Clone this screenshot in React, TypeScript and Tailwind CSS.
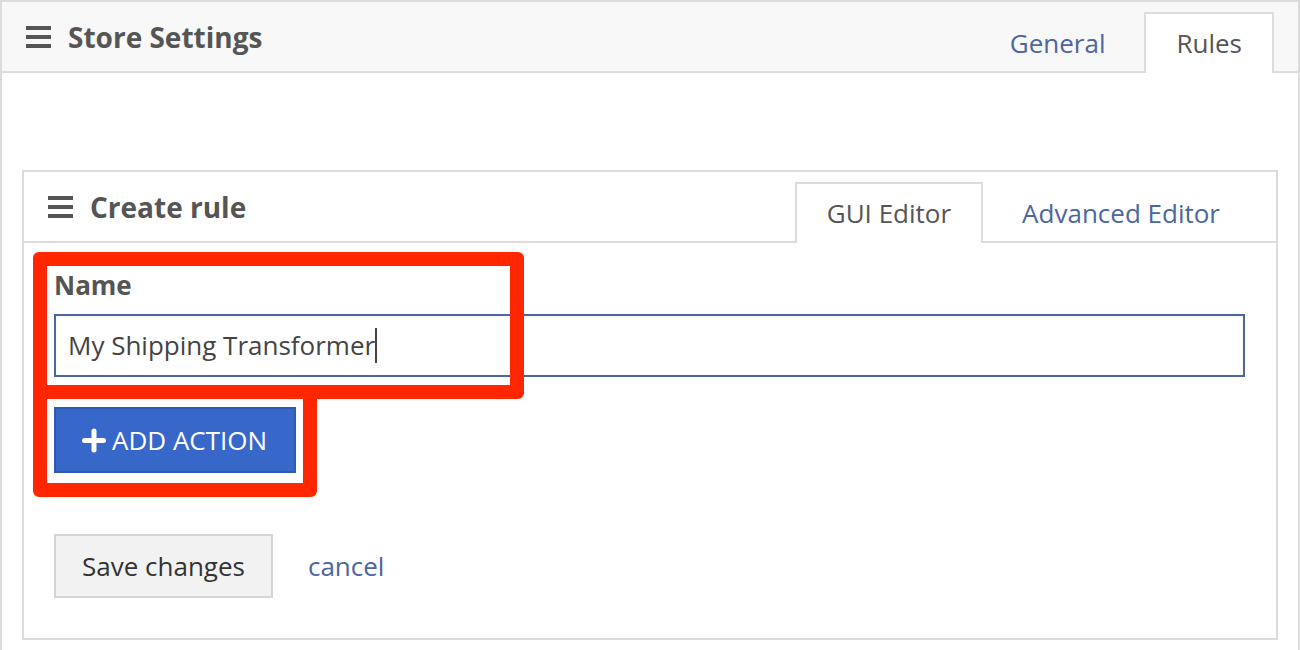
import React from "react";

const Burger = () => (
  <svg width="25" height="22" viewBox="0 0 25 22" className="shrink-0 text-[#555]">
    <rect x="0" y="0" width="25" height="4" fill="currentColor" />
    <rect x="0" y="9" width="25" height="4" fill="currentColor" />
    <rect x="0" y="18" width="25" height="4" fill="currentColor" />
  </svg>
);

const Tab = ({ label, active }: { label: string; active?: boolean }) => (
  <div
    className={`h-[61px] px-[30px] flex items-center border-2 border-b-0 text-[26px] ${
      active ? "bg-white border-[#dcdcdc] text-[#555]" : "border-transparent text-[#4b66a0]"
    }`}
  >
    {label}
  </div>
);

const App = () => {
  return (
    <div
      className="relative w-[1300px] h-[650px] overflow-hidden bg-white"
      style={{ fontFamily: '"Open Sans", "Liberation Sans", sans-serif' }}
    >
      <div className="border-2 border-[#dcdcdc] h-[700px]">
        {/* store settings header */}
        <div className="h-[71px] bg-[#f8f8f8] border-b-2 border-[#dcdcdc] flex items-center justify-between">
          <div className="flex items-center gap-[17px] pl-6">
            <Burger />
            <h1 className="text-[28px] font-bold text-[#555]">Store Settings</h1>
          </div>
          <div className="flex items-end gap-[7px] self-end mb-[-2px] mr-6">
            <Tab label="General" />
            <Tab label="Rules" active />
          </div>
        </div>

        <div className="px-5 pt-[97px]">
          <div className="border-2 border-[#dcdcdc]">
            {/* create rule header */}
            <div className="h-[71px] border-b-2 border-[#dcdcdc] flex items-center justify-between">
              <div className="flex items-center gap-[17px] pl-6">
                <Burger />
                <h2 className="text-[28px] font-bold text-[#555]">Create rule</h2>
              </div>
              <div className="flex items-end gap-[7px] self-end mb-[-2px] mr-6">
                <Tab label="GUI Editor" active />
                <Tab label="Advanced Editor" />
              </div>
            </div>

            <div className="pl-[30px] pr-[31px] pt-6 pb-10">
              <label className="block text-[26px] leading-[36px] font-bold text-[#555]">Name</label>
              <div className="mt-[11px] h-[63px] border-2 border-[#4b66a0] flex items-center pl-3 text-[26px] text-[#444] shadow-[inset_0_1px_3px_rgba(0,0,0,0.06)]">
                My Shipping Transformer
                <span className="inline-block w-[2px] h-[35px] bg-[#444]" />
              </div>

              <button className="mt-[30px] h-[66px] pl-[26px] pr-[27px] flex items-center gap-[6px] bg-[#3767c9] border-2 border-[#2e5ab3] text-white text-[26px]">
                <svg width="24" height="25" viewBox="0 0 24 25">
                  <path d="M12 3v19M2.5 12.5h19" stroke="white" strokeWidth="5" strokeLinecap="round" />
                </svg>
                ADD ACTION
              </button>

              <div className="mt-[61px] flex items-center gap-[35px]">
                <button className="h-16 px-[26px] bg-[#f2f2f2] border-2 border-[#d4d4d4] text-[26px] text-[#333]">
                  Save changes
                </button>
                <a className="text-[26px] text-[#4b66a0]">cancel</a>
              </div>
            </div>
          </div>
        </div>
      </div>

      {/* annotation boxes */}
      <div className="absolute left-[33px] top-[252px] w-[491px] h-[147px] border-[14px] border-[#ff2600] rounded-[6px]" />
      <div className="absolute left-[33px] top-[385px] w-[284px] h-[112px] border-[14px] border-[#ff2600] rounded-[6px]" />
    </div>
  );
};

export default App;
